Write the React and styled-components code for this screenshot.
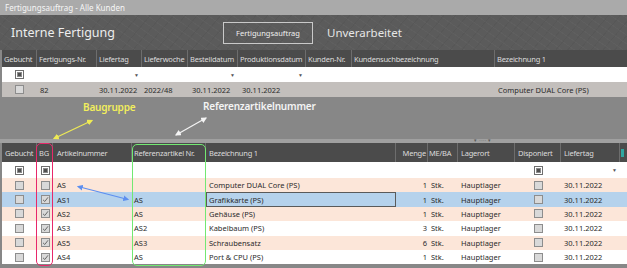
import React from 'react';
import styled, { createGlobalStyle } from 'styled-components';

const Global = createGlobalStyle`
  html, body { margin: 0; padding: 0; background: #878787; }
  body { font-family: "Noto Sans", "Open Sans", sans-serif; }
  * { box-sizing: border-box; }
`;

const Window = styled.div`
  position: relative;
  width: 627px;
  height: 268px;
  overflow: hidden;
  background: #878787;
  display: flex;
  flex-direction: column;
`;

const TitleBar = styled.div`
  height: 15px;
  background: #aaaaaa;
  color: #f6f6f6;
  font-size: 8px;
  padding-left: 5px;
  display: flex;
  align-items: center;
`;

const Banner = styled.div`
  height: 35px;
  background-color: #5b5b5b;
  background-image: repeating-linear-gradient(35deg, rgba(255,255,255,0.025) 0 1px, transparent 1px 7px),
    repeating-linear-gradient(-50deg, rgba(0,0,0,0.04) 0 1px, transparent 1px 9px);
  display: flex;
  align-items: center;
`;

const Heading = styled.div`
  margin-left: 11px;
  width: 212px;
  font-size: 12.5px;
  color: #ededed;
`;

const TabButton = styled.div`
  width: 90px;
  height: 22px;
  border: 1px solid #c9c9c9;
  color: #efefef;
  font-size: 7.5px;
  display: flex;
  align-items: center;
  justify-content: center;
`;

const TabLabel = styled.div`
  margin-left: 14px;
  font-size: 11.5px;
  color: #e6e6e6;
`;

const Table = styled.div`
  padding-left: 2px;
  display: flex;
  flex-direction: column;
`;

const Row = styled.div`
  display: grid;
  grid-template-columns: ${p => p.$cols};
  height: ${p => p.$h}px;
  background: ${p => p.$bg};
  color: ${p => (p.$header ? '#dcdcdc' : '#2b2b2b')};
  font-size: 7.5px;
  letter-spacing: ${p => (p.$header ? '-0.22px' : '0')};
`;

const Cell = styled.div`
  position: relative;
  display: flex;
  align-items: center;
  justify-content: ${p => (p.$align === 'right' ? 'flex-end' : p.$align === 'center' ? 'center' : 'flex-start')};
  padding: 0 ${p => (p.$align === 'right' ? 1 : 0)}px 0 ${p => p.$pl ?? 3}px;
  white-space: nowrap;
  overflow: hidden;
  border-right: ${p => (p.$sep ? '1px solid #6d6d6d' : 'none')};
  outline: ${p => (p.$focus ? '1px solid #5a5a5a' : 'none')};
  outline-offset: -1px;
`;

const Drop = styled.span`
  position: absolute;
  right: 3px;
  top: 50%;
  transform: translateY(-50%);
  font-size: 5px;
  color: #555;
`;

const Box = styled.span`
  width: 9px;
  height: 9px;
  border: 1px solid ${p => (p.$ind ? '#6e6e6e' : '#8d8d8d')};
  background: ${p => (p.$ind ? '#ffffff' : '#d9d9d9')};
  display: flex;
  align-items: center;
  justify-content: center;
`;

const Inner = styled.span`
  width: 5px;
  height: 5px;
  background: #505050;
  border: 1px solid #8a8a8a;
`;

const Gap = styled.div`
  height: 42px;
`;

const Splitter = styled.div`
  height: 4px;
  background: #a0a0a0;
  position: relative;
`;

const Grip = styled.span`
  position: absolute;
  left: 474px;
  top: -2px;
  font-size: 5px;
  color: #5a5a5a;
  letter-spacing: 0.5px;
`;

const Teal = styled.span`
  width: 3px;
  height: 8px;
  background: #2fa6a0;
`;

const Overlay = styled.svg`
  position: absolute;
  left: 0;
  top: 0;
  pointer-events: none;
`;

const Note = styled.div`
  position: absolute;
  left: ${p => p.$x}px;
  top: ${p => p.$y}px;
  color: ${p => p.$color};
  font-size: 10px;
  font-weight: 600;
  letter-spacing: -0.2px;
`;

const Frame = styled.div`
  position: absolute;
  left: ${p => p.$x}px;
  top: ${p => p.$y}px;
  width: ${p => p.$w}px;
  height: ${p => p.$h}px;
  border: 1.5px solid ${p => p.$color};
  border-radius: 5px;
`;

const Check = ({ checked, ind }) => (
  <Box $ind={ind}>
    {ind && <Inner />}
    {checked && (
      <svg width="7" height="7" viewBox="0 0 7 7">
        <path d="M1 3.8 L2.8 5.5 L6 1.3" fill="none" stroke="#6a6a6a" strokeWidth="1" />
      </svg>
    )}
  </Box>
);

const topCols = '35px 60px 45px 46px 50px 68px 46px 143px 1fr';
const topHeaders = ['Gebucht', 'Fertigungs-Nr.', 'Liefertag', 'Lieferwoche', 'Bestelldatum', 'Produktionsdatum', 'Kunden-Nr.', 'Kundensuchbezeichnung', 'Bezeichnung 1'];

const botCols = '35px 16px 79px 74px 190px 32px 30px 57px 46px 59px 1fr';
const botHeaders = [
  ['Gebucht'], ['BG', 'left', 2], ['Artikelnummer', 'left', 4], ['Referenzartikel Nr.', 'left', 2], ['Bezeichnung 1'],
  ['Menge', 'right'], ['ME/BA', 'left', 1], ['Lagerort'], ['Disponiert'], ['Liefertag'],
];

const rows = [
  { bg: '#fce6d9', bgFlag: false, art: 'AS', ref: '', bez: 'Computer DUAL Core (PS)', m: '1' },
  { bg: '#b5d2ec', bgFlag: true, art: 'AS1', ref: 'AS', bez: 'Grafikkarte (PS)', m: '1', sel: true },
  { bg: '#fce6d9', bgFlag: true, art: 'AS2', ref: 'AS', bez: 'Gehäuse (PS)', m: '1' },
  { bg: '#ffffff', bgFlag: true, art: 'AS3', ref: 'AS2', bez: 'Kabelbaum (PS)', m: '3' },
  { bg: '#fce6d9', bgFlag: true, art: 'AS5', ref: 'AS3', bez: 'Schraubensatz', m: '6' },
  { bg: '#ffffff', bgFlag: true, art: 'AS4', ref: 'AS', bez: 'Port & CPU (PS)', m: '1' },
];

export default function App() {
  return (
    <Window>
      <Global />
      <TitleBar>Fertigungsauftrag - Alle Kunden</TitleBar>
      <Banner>
        <Heading>Interne Fertigung</Heading>
        <TabButton>Fertigungsauftrag</TabButton>
        <TabLabel>Unverarbeitet</TabLabel>
      </Banner>

      <Table>
        <Row $cols={topCols} $h={17} $bg="#4b4b4b" $header>
          {topHeaders.map((h, i) => (
            <Cell key={h} $sep={i < topHeaders.length - 1} $pl={2}>{h}</Cell>
          ))}
        </Row>
        <Row $cols={topCols} $h={15} $bg="#ffffff">
          <Cell $align="center" $pl={0}><Check ind /></Cell>
          <Cell />
          <Cell><Drop>▼</Drop></Cell>
          <Cell />
          <Cell><Drop>▼</Drop></Cell>
          <Cell><Drop>▼</Drop></Cell>
          <Cell />
          <Cell />
          <Cell />
        </Row>
        <Row $cols={topCols} $h={15} $bg="#c3bfbc">
          <Cell $align="center" $pl={0}><Check /></Cell>
          <Cell>82</Cell>
          <Cell $pl={2}>30.11.2022</Cell>
          <Cell $pl={2}>2022/48</Cell>
          <Cell $pl={4}>30.11.2022</Cell>
          <Cell $pl={4}>30.11.2022</Cell>
          <Cell />
          <Cell />
          <Cell>Computer DUAL Core (PS)</Cell>
        </Row>
      </Table>

      <Gap />
      <Splitter><Grip>▾ ···· ▾</Grip></Splitter>

      <Table>
        <Row $cols={botCols} $h={19} $bg="#4b4b4b" $header>
          {botHeaders.map(([h, a, pl]) => (
            <Cell key={h} $sep $align={a} $pl={pl ?? 3}>{h}</Cell>
          ))}
          <Cell $pl={1}><Teal /></Cell>
        </Row>
        <Row $cols={botCols} $h={16} $bg="#ffffff">
          <Cell $align="center" $pl={0}><Check ind /></Cell>
          <Cell $align="center" $pl={0}><Check ind /></Cell>
          <Cell /><Cell /><Cell /><Cell /><Cell /><Cell />
          <Cell $align="center" $pl={0}><Check ind /></Cell>
          <Cell><Drop>▼</Drop></Cell>
          <Cell />
        </Row>
        {rows.map(r => (
          <Row key={r.art} $cols={botCols} $h={14.4} $bg={r.bg}>
            <Cell $align="center" $pl={0}><Check /></Cell>
            <Cell $align="center" $pl={0}><Check checked={r.bgFlag} /></Cell>
            <Cell $pl={4}>{r.art}</Cell>
            <Cell $pl={2}>{r.ref}</Cell>
            <Cell $focus={r.sel}>{r.bez}</Cell>
            <Cell $align="right">{r.m}</Cell>
            <Cell $pl={3}>Stk.</Cell>
            <Cell>Hauptlager</Cell>
            <Cell $align="center" $pl={0}><Check /></Cell>
            <Cell $pl={3}>30.11.2022</Cell>
            <Cell />
          </Row>
        ))}
      </Table>

      <Note $x={83} $y={100} $color="#f2ee5c">Baugruppe</Note>
      <Note $x={203} $y={99} $color="#f4f4f4">Referenzartikelnummer</Note>
      <Frame $x={36} $y={143} $w={17} $h={123} $color="#e8286a" />
      <Frame $x={132} $y={144} $w={74} $h={122} $color="#72e872" />

      <Overlay width="627" height="268" viewBox="0 0 627 268">
        <defs>
          <marker id="hy" viewBox="0 0 10 10" refX="8" refY="5" markerWidth="5" markerHeight="5" orient="auto-start-reverse">
            <path d="M0 0 L10 5 L0 10 z" fill="#eeea55" />
          </marker>
          <marker id="hw" viewBox="0 0 10 10" refX="8" refY="5" markerWidth="5" markerHeight="5" orient="auto-start-reverse">
            <path d="M0 0 L10 5 L0 10 z" fill="#f4f4f4" />
          </marker>
          <marker id="hb" viewBox="0 0 10 10" refX="8" refY="5" markerWidth="5" markerHeight="5" orient="auto-start-reverse">
            <path d="M0 0 L10 5 L0 10 z" fill="#5d8ff0" />
          </marker>
        </defs>
        <line x1="54" y1="138.5" x2="92" y2="120.5" stroke="#eeea55" strokeWidth="1.2" markerStart="url(#hy)" markerEnd="url(#hy)" />
        <line x1="176" y1="135" x2="206" y2="118" stroke="#f4f4f4" strokeWidth="1.2" markerStart="url(#hw)" markerEnd="url(#hw)" />
        <line x1="78" y1="186.5" x2="128" y2="199.5" stroke="#5d8ff0" strokeWidth="1.2" markerStart="url(#hb)" markerEnd="url(#hb)" />
      </Overlay>
    </Window>
  );
}
